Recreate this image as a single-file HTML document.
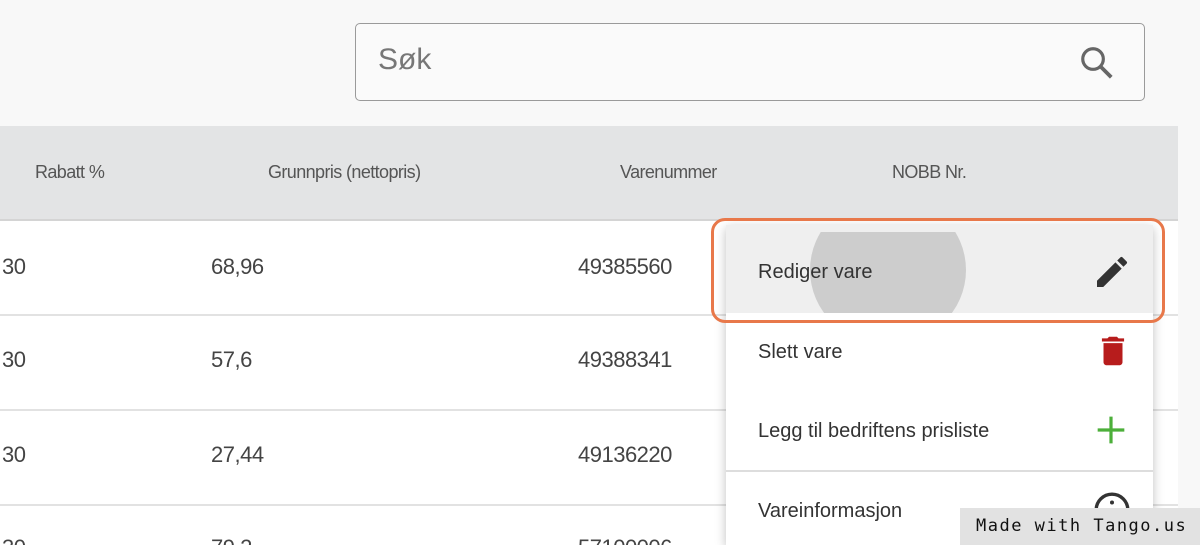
<!DOCTYPE html>
<html><head><style>
html,body{margin:0;width:1200px;height:545px;overflow:hidden}
body{background:#f8f8f8;font-family:"Liberation Sans",sans-serif;position:relative}
.abs{position:absolute}
.search{left:355px;top:23px;width:788px;height:76px;border:1.5px solid #9a9a9a;border-radius:5px;background:#fafafa}
.table{left:0;top:126px;width:1178px;height:419px;background:#fff}
.hdr{left:0;top:126px;width:1178px;height:93px;background:#e3e4e5;border-bottom:2px solid #d4d4d4}
.hd{top:162px;font-size:18px;color:#555;letter-spacing:-0.6px}
.line{left:0;width:1178px;height:1.5px;background:#e2e2e2}
.cell{font-size:22px;color:#444;letter-spacing:-0.5px}
.menu{left:726px;top:225px;width:427px;height:320px;background:#fff;box-shadow:0 3px 10px rgba(0,0,0,.25)}
.mi{left:758px;font-size:20px;color:#333}
</style></head><body>
<div class="abs search"><span class="abs" style="left:22px;top:19px;font-size:30px;color:#777">Søk</span>
<svg class="abs" style="left:722px;top:20px" width="38" height="38" viewBox="0 0 24 24"><circle cx="9.5" cy="9.5" r="6.5" fill="none" stroke="#666" stroke-width="2"/><path d="M14.5 14.5L21 21" stroke="#666" stroke-width="2.4"/></svg></div>
<div class="abs table"></div>
<div class="abs hdr"></div>
<div class="abs hd" style="left:35px">Rabatt %</div>
<div class="abs hd" style="left:268px">Grunnpris (nettopris)</div>
<div class="abs hd" style="left:620px">Varenummer</div>
<div class="abs hd" style="left:892px">NOBB Nr.</div>
<div class="abs line" style="top:314px"></div>
<div class="abs line" style="top:409px"></div>
<div class="abs line" style="top:504px"></div>
<div class="abs cell" style="left:2px;top:254px">30</div><div class="abs cell" style="left:211px;top:254px">68,96</div><div class="abs cell" style="left:578px;top:254px">49385560</div>
<div class="abs cell" style="left:2px;top:347px">30</div><div class="abs cell" style="left:211px;top:347px">57,6</div><div class="abs cell" style="left:578px;top:347px">49388341</div>
<div class="abs cell" style="left:2px;top:442px">30</div><div class="abs cell" style="left:211px;top:442px">27,44</div><div class="abs cell" style="left:578px;top:442px">49136220</div>
<div class="abs cell" style="left:2px;top:535px">30</div><div class="abs cell" style="left:211px;top:535px">79,2</div><div class="abs cell" style="left:578px;top:535px">57100006</div>
<div class="abs menu">
<div class="abs" style="left:0;top:0;width:427px;height:88px;background:#efefef;overflow:hidden"><div class="abs" style="left:84px;top:-30px;width:156px;height:150px;border-radius:50%;background:#cdcdcd;clip-path:inset(37px 0 30px 0)"></div></div>
<div class="abs" style="left:0;top:245px;width:427px;height:1.5px;background:#ddd"></div>
</div>
<div class="abs mi" style="top:261px">Rediger vare</div>
<div class="abs mi" style="top:341px">Slett vare</div>
<div class="abs mi" style="top:420px">Legg til bedriftens prisliste</div>
<div class="abs mi" style="top:500px">Vareinformasjon</div>
<svg class="abs" style="left:1092px;top:252px" width="40" height="40" viewBox="0 0 24 24"><path d="M3 17.25V21h3.75L17.81 9.94l-3.75-3.75L3 17.25zM20.71 7.04a1 1 0 000-1.41l-2.34-2.34a1 1 0 00-1.41 0l-1.83 1.83 3.75 3.75 1.83-1.83z" fill="#333"/></svg>
<svg class="abs" style="left:1094px;top:331px" width="38" height="40" viewBox="0 0 24 24"><path d="M6 19c0 1.1.9 2 2 2h8c1.1 0 2-.9 2-2V7H6v12zM19 4h-3.5l-1-1h-5l-1 1H5v2h14V4z" fill="#b71c1c"/></svg>
<svg class="abs" style="left:1095px;top:414px" width="32" height="32" viewBox="0 0 24 24"><path d="M12 2v20M2 12h20" stroke="#4caf3a" stroke-width="2.4"/></svg>
<svg class="abs" style="left:1092px;top:490px" width="40" height="40" viewBox="0 0 24 24"><circle cx="12" cy="12" r="9.5" fill="none" stroke="#333" stroke-width="2"/><circle cx="12" cy="7.5" r="1.2" fill="#333"/><path d="M12 11v6" stroke="#333" stroke-width="2"/></svg>
<div class="abs" style="left:711px;top:218px;width:448px;height:99px;border:3px solid #e8784a;border-radius:14px"></div>
<div class="abs" style="left:960px;top:508px;width:240px;height:37px;background:#e2e2e2"><span class="abs" style="left:16px;top:8px;font-family:'DejaVu Sans Mono','Liberation Mono',monospace;font-size:17px;letter-spacing:1.5px;color:#111">Made with Tango.us</span></div>
</body></html>
